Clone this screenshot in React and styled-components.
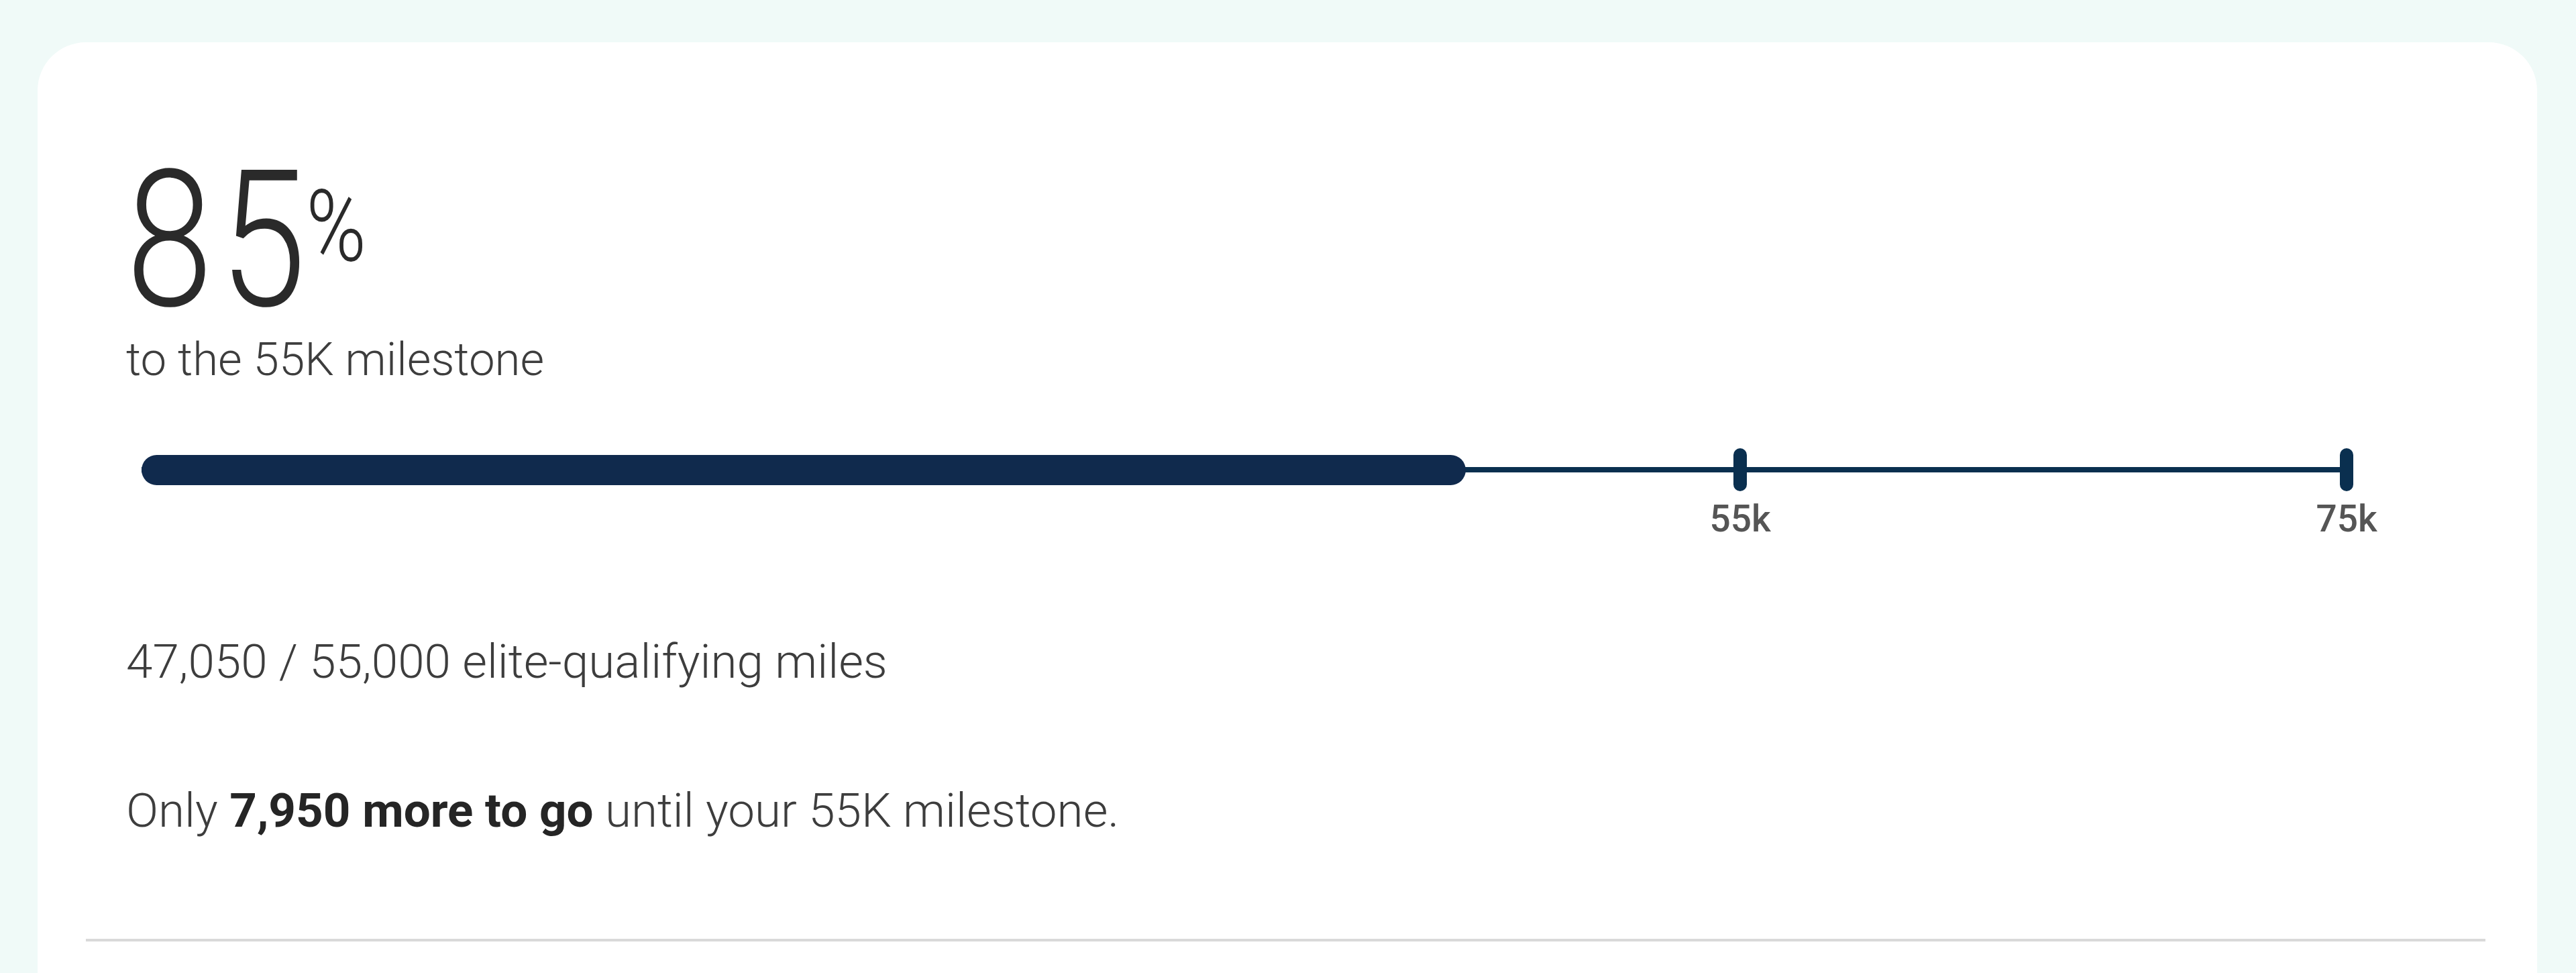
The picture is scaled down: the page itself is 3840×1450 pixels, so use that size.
import React from "react";
import styled, { createGlobalStyle } from "styled-components";

const GlobalStyle = createGlobalStyle`
  html, body {
    margin: 0;
    padding: 0;
    background: #f0faf8;
    overflow: hidden;
  }
  body {
    font-family: Roboto, "Liberation Sans", Arial, sans-serif;
    color: #3b3b3b;
  }
`;

const Page = styled.div`
  padding: 63px 58px 0 56px;
  min-height: 1450px;
  box-sizing: border-box;
`;

const Card = styled.section`
  background: #ffffff;
  border-radius: 72px;
  padding: 157px 77px 200px 72px;
`;

const Summary = styled.div`
  padding-left: 60px;
  display: flex;
  flex-direction: column;
`;

const Figure = styled.div`
  display: flex;
  align-items: flex-start;
  transform: scaleX(0.82);
  transform-origin: left center;
  color: #2a2a2a;
  font-weight: 300;
`;

const Digits = styled.span`
  font-size: 284px;
  line-height: 276px;
  letter-spacing: 12px;
`;

const Percent = styled.span`
  font-size: 148px;
  line-height: 148px;
  margin-top: 44px;
  margin-left: -12px;
`;

const Caption = styled.p`
  margin: 0;
  font-size: 69px;
  font-weight: 300;
  line-height: 80px;
  color: #3d3d3d;
`;

const Meter = styled.div`
  margin: 92px 207px 0 23px;
`;

const Track = styled.div`
  position: relative;
  height: 64px;
  display: flex;
  align-items: center;

  &::before {
    content: "";
    position: absolute;
    left: 0;
    right: 0;
    top: 28px;
    height: 8px;
    background: #0a2f4f;
  }
`;

const Fill = styled.div`
  position: relative;
  height: 45px;
  border-radius: 23px;
  background: #102a4d;
`;

const Tick = styled.span`
  position: absolute;
  top: 0;
  width: 20px;
  height: 64px;
  border-radius: 10px;
  background: #0a2f4f;
  transform: translateX(-50%);
`;

const Scale = styled.div`
  position: relative;
  height: 66px;
  margin-top: 8px;
`;

const ScaleLabel = styled.span`
  position: absolute;
  top: 0;
  transform: translateX(-50%);
  font-size: 55px;
  line-height: 66px;
  font-weight: 500;
  color: #555555;
`;

const Stat = styled.p`
  margin: 137px 0 0;
  font-size: 71px;
  font-weight: 300;
  line-height: 85px;
  color: #3d3d3d;
`;

const Note = styled(Stat)`
  strong {
    font-weight: 700;
    color: #252525;
  }
`;

const Divider = styled.hr`
  margin: 149px 0 0;
  border: 0;
  height: 4px;
  background: #d9d9d9;
`;

const milestones = [
  { label: "55k", at: 72.5 },
  { label: "75k", at: 100 },
];

export default function App() {
  return (
    <>
      <GlobalStyle />
      <Page>
        <Card>
          <Summary>
            <Figure>
              <Digits>85</Digits>
              <Percent>%</Percent>
            </Figure>
            <Caption>to the 55K milestone</Caption>
            <Meter>
              <Track>
                <Fill style={{ width: "60.05%" }} />
                {milestones.map((m) => (
                  <Tick key={m.label} style={{ left: `${m.at}%` }} />
                ))}
              </Track>
              <Scale>
                {milestones.map((m) => (
                  <ScaleLabel key={m.label} style={{ left: `${m.at}%` }}>
                    {m.label}
                  </ScaleLabel>
                ))}
              </Scale>
            </Meter>
            <Stat>47,050 / 55,000 elite-qualifying miles</Stat>
            <Note>
              Only <strong>7,950 more to go</strong> until your 55K milestone.
            </Note>
          </Summary>
          <Divider />
        </Card>
      </Page>
    </>
  );
}
